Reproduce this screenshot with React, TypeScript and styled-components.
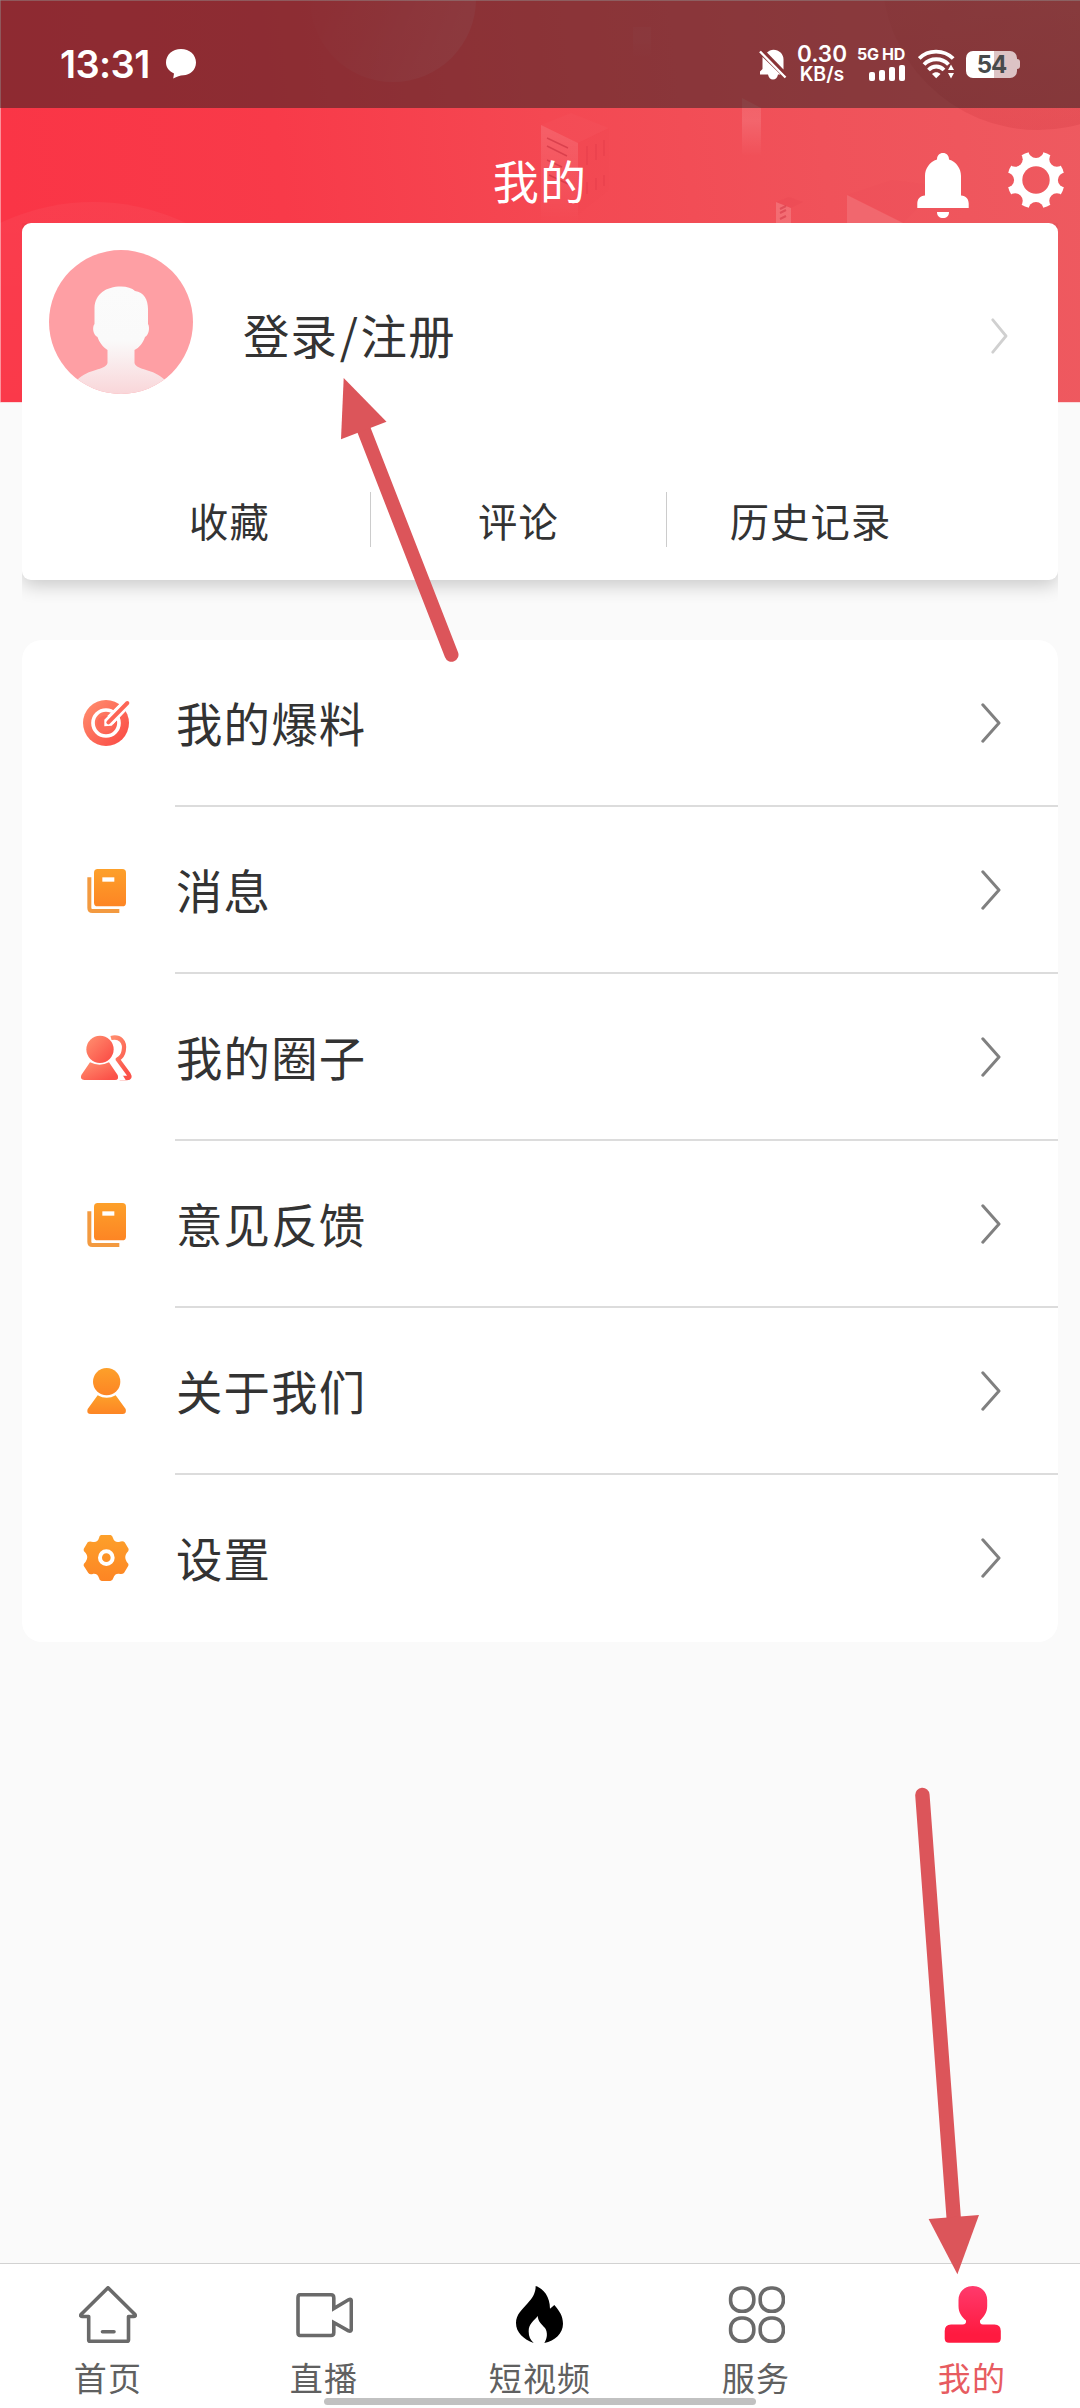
import React from "react";
import styled, { createGlobalStyle } from "styled-components";

const Global = createGlobalStyle`
  * { box-sizing: border-box; }
  body {
    margin: 0;
    background: #fafafa;
    font-family: "Noto Sans CJK SC", "Noto Sans", sans-serif;
    color: #333;
  }
  svg { display: block; flex: none; }
`;

const Screen = styled.div`
  position: relative;
  width: 1080px;
  height: 2408px;
  display: flex;
  flex-direction: column;
  background: #fafafa;
  overflow: hidden;
`;

const HeroArt = styled.svg`
  position: absolute;
  top: 0;
  left: 0;
`;

const StatusBar = styled.div`
  position: relative;
  height: 108px;
  padding: 20px 60px 0 60px;
  display: flex;
  align-items: center;
  justify-content: space-between;
  background: rgba(30, 31, 28, 0.49);
  color: #fff;
  font-family: Inter, "Noto Sans", sans-serif;
`;

const StatusGroup = styled.div`
  display: flex;
  align-items: center;
`;

const Clock = styled.span`
  width: 106px;
  font-size: 38px;
  line-height: 40px;
  font-weight: 600;
  letter-spacing: -0.6px;
  white-space: nowrap;
`;

const Speed = styled.div`
  width: 50px;
  margin: 0 11px 0 10px;
  display: flex;
  flex-direction: column;
  align-items: center;
  font-weight: 600;
  white-space: nowrap;
`;

const SpeedLine = styled.span<{ $size: number; $height: number }>`
  font-size: ${(p) => p.$size}px;
  line-height: ${(p) => p.$height}px;
`;

const Network = styled.div`
  width: 47px;
  margin-right: 13px;
  display: flex;
  flex-direction: column;
  align-items: flex-end;
  gap: 4px;
`;

const NetworkLabel = styled.span`
  font-size: 16px;
  line-height: 13px;
  font-weight: 700;
  letter-spacing: -0.3px;
  white-space: nowrap;
`;

const Bars = styled.div`
  display: flex;
  align-items: flex-end;
  gap: 4px;
`;

const Bar = styled.i<{ $h: number }>`
  width: 6px;
  height: ${(p) => p.$h}px;
  border-radius: 2px;
  background: #fff;
`;

const Battery = styled.div`
  width: 51px;
  height: 27px;
  margin-left: 11px;
  border-radius: 7px;
  display: flex;
  align-items: center;
  justify-content: center;
  background: linear-gradient(90deg, #fff 55%, #dcc3c5 55%);
  color: #474a4c;
  font-size: 24px;
  line-height: 27px;
  font-weight: 700;
  letter-spacing: -1px;
`;

const BatteryTip = styled.i`
  width: 3px;
  height: 10px;
  border-radius: 0 3px 3px 0;
  background: #dcc3c5;
`;

const TitleBar = styled.header`
  position: relative;
  height: 115px;
  display: grid;
  grid-template-columns: 1fr auto 1fr;
  color: #fff;
`;

const Title = styled.h1`
  grid-column: 2;
  margin: 0;
  padding-top: 37px;
  font-size: 46px;
  line-height: 68px;
  font-weight: 400;
  letter-spacing: 1.3px;
`;

const TitleActions = styled.div`
  display: flex;
  justify-content: flex-end;
  align-items: flex-start;
  gap: 38px;
  padding: 43px 15px 0 0;
`;

const ProfileCard = styled.section`
  position: relative;
  margin: 0 22px;
  height: 357px;
  display: flex;
  flex-direction: column;
  border-radius: 9px;
  background: #fff;
  box-shadow: 0 6px 18px rgba(0, 0, 0, 0.19);
  clip-path: inset(0 0 -40px 0);
`;

const ProfileRow = styled.div`
  height: 240px;
  padding: 27px 50px 0 27px;
  display: flex;
  align-items: flex-start;
`;

const LoginLabel = styled.div`
  flex: 1;
  margin: 50px 0 0 50px;
  font-size: 46.4px;
  line-height: 68px;
  letter-spacing: 1.2px;
`;

const Slash = styled.span`
  margin: 0 1.5px;
`;

const LoginArrow = styled.div`
  margin-top: 68px;
`;

const Tabs = styled.div`
  display: flex;
  align-items: center;
  height: 113px;
  padding: 0 92px 0 67px;
`;

const Tab = styled.div<{ $width: number }>`
  width: ${(p) => p.$width}px;
  text-align: center;
  font-size: 39.3px;
  line-height: 56px;
  letter-spacing: 1.1px;
`;

const TabDivider = styled.i`
  width: 1px;
  height: 55px;
  background: #ccc;
`;

const Menu = styled.section`
  margin: 60px 22px 0;
  height: 1002px;
  border-radius: 20px;
  background: #fff;
`;

const MenuRow = styled.div`
  height: 167px;
  padding-left: 57px;
  display: flex;
  align-items: stretch;
`;

const MenuIcon = styled.div`
  width: 96px;
  padding-top: 55px;
`;

const MenuBody = styled.div<{ $last: boolean }>`
  flex: 1;
  padding-right: 57px;
  display: flex;
  align-items: center;
  justify-content: space-between;
  border-bottom: 2px solid ${(p) => (p.$last ? "transparent" : "#dcdcdc")};
`;

const MenuLabel = styled.span`
  padding: 0 0 1px 1px;
  font-size: 46.4px;
  line-height: 68px;
  letter-spacing: 1.2px;
`;

const Nav = styled.nav`
  margin-top: auto;
  height: 145px;
  display: flex;
  border-top: 1px solid #d2d2d2;
  background: #fff;
`;

const NavItem = styled.div<{ $active: boolean }>`
  flex: 1;
  padding-top: 22px;
  display: flex;
  flex-direction: column;
  align-items: center;
  color: ${(p) => (p.$active ? "#e75b60" : "#606060")};
`;

const NavLabel = styled.span`
  margin-top: 9px;
  font-size: 33px;
  line-height: 48px;
  letter-spacing: 1.2px;
`;

const HomeIndicator = styled.div`
  position: absolute;
  left: 324px;
  bottom: 3px;
  width: 432px;
  height: 7px;
  border-radius: 4px;
  background: #c1c1c1;
`;

const Overlay = styled.svg`
  position: absolute;
  top: 0;
  left: 0;
  pointer-events: none;
`;

const Chevron = ({ w, h, color, sw }: { w: number; h: number; color: string; sw: number }) => (
  <svg width={w} height={h} viewBox={`0 0 ${w} ${h}`} fill="none">
    <path
      d={`M1.8 1.8 L${w - 2} ${h / 2} L1.8 ${h - 1.8}`}
      stroke={color}
      strokeWidth={sw}
      strokeLinecap="round"
      strokeLinejoin="round"
    />
  </svg>
);

const Hero = () => (
  <HeroArt width="1080" height="403" viewBox="0 0 1080 403">
    <defs>
      <linearGradient id="heroBg" gradientUnits="userSpaceOnUse" x1="0" y1="120" x2="1080" y2="0">
        <stop offset="0" stopColor="#fa3546" />
        <stop offset="0.25" stopColor="#f83a49" />
        <stop offset="0.5" stopColor="#f44852" />
        <stop offset="0.75" stopColor="#f0525a" />
        <stop offset="1" stopColor="#ee5a60" />
      </linearGradient>
      <linearGradient id="bubble" x1="0" y1="0" x2="1" y2="0.4">
        <stop offset="0.1" stopColor="#fff" stopOpacity="0" />
        <stop offset="1" stopColor="#fff" stopOpacity="0.08" />
      </linearGradient>
      <linearGradient id="hill" x1="0" y1="0" x2="0" y2="1">
        <stop offset="0" stopColor="#fff" stopOpacity="0.04" />
        <stop offset="0.5" stopColor="#fff" stopOpacity="0.02" />
      </linearGradient>
      <linearGradient id="pillar" x1="0" y1="0" x2="0" y2="1">
        <stop offset="0" stopColor="#fff" stopOpacity="0.1" />
        <stop offset="0.4" stopColor="#fff" stopOpacity="0.12" />
        <stop offset="1" stopColor="#fff" stopOpacity="0" />
      </linearGradient>
      <linearGradient id="tower" x1="0" y1="0" x2="0" y2="1">
        <stop offset="0" stopColor="#fff" stopOpacity="0.13" />
        <stop offset="1" stopColor="#fff" stopOpacity="0" />
      </linearGradient>
      <linearGradient id="disc" x1="0" y1="0" x2="0" y2="1">
        <stop offset="0.4" stopColor="#c22" stopOpacity="0" />
        <stop offset="1" stopColor="#c83038" stopOpacity="0.22" />
      </linearGradient>
    </defs>
    <rect width="1080" height="402" fill="url(#heroBg)" />
    <rect y="402" width="1080" height="1" fill="#fbd9db" />
    <circle cx="393" cy="-1" r="83" fill="url(#bubble)" />
    <circle cx="93" cy="418" r="216" fill="url(#hill)" />
    <circle cx="1038" cy="-26" r="156" fill="url(#disc)" />
    <rect x="633" y="27" width="18" height="30" fill="url(#pillar)" opacity="0.3" />
    <path d="M742 98 L761 108 V156 H742 Z" fill="url(#pillar)" />
    <path d="M541 125 L578 143 V223 H541 Z" fill="url(#tower)" />
    <path d="M541 125 L571 113 L609 128 L578 143 Z" fill="#fff" opacity="0.02" />
    <path d="M578 143 L609 128 V190 L578 215 Z" fill="#d02030" opacity="0.02" />
    <g stroke="#c9303f" strokeWidth="1.4" opacity="0.6">
      <path d="M547 138 L568 148 M547 146 L567 156 M547 160 L562 167 M549 175 L568 184" />
    </g>
    <g stroke="#d62f40" strokeWidth="1.4" opacity="0.3">
      <path d="M587 146 V165 M596 144 V160 M604 140 V156 M587 182 V194 M596 178 V190 M604 175 V186" />
    </g>
    <path d="M776 202 L791 208 V223 H776 Z" fill="#fff" opacity="0.16" />
    <path d="M776 202 L789 197 L803 202 L791 208 Z" fill="#d83040" opacity="0.1" />
    <path d="M780 209 L786 206 M780 213 L786 210 M780 219 L786 216" stroke="#d63a48" strokeWidth="2" opacity="0.6" />
    <path d="M847 195 L903 223 H847 Z" fill="#fff" opacity="0.12" />
    <path d="M847 195 L892 180 L940 186 L903 223 Z" fill="#e03a48" opacity="0.04" />
    <path d="M0 0.5 H1080" stroke="#fff" opacity="0.45" />
    <path d="M0.5 0 V402" stroke="#fff" opacity="0.45" />
  </HeroArt>
);

const ChatBubble = () => (
  <svg width="30" height="30" viewBox="0 0 30 30" fill="#fff">
    <path d="M15 0 C23.5 0 30 5.8 30 13.5 C30 21.5 23.5 26 17.5 26.3 C14 26.5 11 27.5 7.2 29.5 L8 24.6 C3 22 0 18.5 0 13.5 C0 5.8 6.5 0 15 0 Z" />
  </svg>
);

const MuteBell = () => (
  <svg width="28" height="31" viewBox="0 0 28 31" fill="#fff">
    <path d="M8 3.5 C9.7 1.8 12 0.7 14.5 0.7 C20 0.7 24.5 5 24.5 10.5 V20.5 Z" />
    <path d="M3.5 8 L21.5 25.5 H19 C18.5 28.5 16.5 30.5 14 30.5 C11.5 30.5 9.5 28.5 9 25.5 H1 V22.5 L3.5 20 Z" />
    <path d="M1 2.5 L26.5 28.5" stroke="#fff" strokeWidth="2.4" />
    <path d="M3.5 1.8 L27 25.6" stroke="#8a3336" strokeWidth="1.6" />
  </svg>
);

const Wifi = () => (
  <svg width="37" height="30" viewBox="0 0 37 30" fill="none" stroke="#fff" strokeWidth="3.8">
    <path d="M1.2 9.5 C10 0.2 26 0.2 35.2 9.5" />
    <path d="M6 15.5 C12.5 8.5 24 8.5 30.5 15.5" />
    <path d="M10.5 21 C15 16.3 21.5 16.3 26 21" />
    <path d="M14 25 C16.5 22.6 20 22.6 22.5 25 L18.2 29.2 Z" fill="#fff" stroke="none" />
    <path d="M33 15.5 L36 21 H30 Z M33 29.5 L36 24 H30 Z" fill="#fff" stroke="none" />
  </svg>
);

const Bell = () => (
  <svg width="52" height="67" viewBox="0 0 52 67" fill="#fff">
    <path d="M26 2 C29.5 2 32 4.5 32 8.5 C39.5 11 44 17.5 44 25 V44.5 C49 45 51.7 48 51.7 52.5 V57 H0.3 V52.5 C0.3 48 3 45 8 44.5 V25 C8 17.5 12.5 11 20 8.5 C20 4.5 22.5 2 26 2 Z" />
    <path d="M20 61 H32 C32 65 29.5 67 26 67 C22.5 67 20 65 20 61 Z" />
  </svg>
);

const notchAngles = [0, 45, 90, 135, 180, 225, 270, 315];

const GearOutline = () => (
  <svg width="58" height="58" viewBox="-29 -29 58 58">
    <mask id="gearNotches">
      <rect x="-30" y="-30" width="60" height="60" fill="#fff" />
      <circle r="13.7" fill="#000" />
      {notchAngles.map((a) => (
        <circle key={a} r="7.6" cx="29.5" transform={`rotate(${a})`} fill="#000" />
      ))}
    </mask>
    <circle r="28.8" fill="#fff" mask="url(#gearNotches)" />
  </svg>
);

const Avatar = () => (
  <svg width="144" height="144" viewBox="0 0 144 144">
    <defs>
      <clipPath id="avatarClip">
        <circle cx="72" cy="72" r="72" />
      </clipPath>
      <linearGradient id="avatarBody" x1="0" y1="0" x2="0" y2="1">
        <stop offset="0" stopColor="#fbfbfb" />
        <stop offset="0.5" stopColor="#fafafa" />
        <stop offset="1" stopColor="#f9d6d9" />
      </linearGradient>
    </defs>
    <g clipPath="url(#avatarClip)">
      <rect width="144" height="144" fill="#fe9fa4" />
      <path
        d="M72 36.5 C78 36.5 83 38 86 41 C95 42 99 50 99 59 V74 C101 77 100 85 96 87 C94 93 90 98 85.5 100 V113 C88 121 104 118 116 130 V144 H28 V130 C40 118 56 121 58.5 113 V100 C54 97 50 92 48.5 87 C44 85 43 77 45.5 74 V58 C46 44 57 36.5 72 36.5 Z"
        fill="url(#avatarBody)"
      />
    </g>
  </svg>
);

const Gradients = () => (
  <defs>
    <linearGradient id="coral" x1="0" y1="0" x2="1" y2="1">
      <stop offset="0.1" stopColor="#ff8a6c" />
      <stop offset="0.85" stopColor="#fb5249" />
    </linearGradient>
    <linearGradient id="amber" x1="0" y1="0" x2="0" y2="1">
      <stop offset="0" stopColor="#fda02a" />
      <stop offset="1" stopColor="#fd8524" />
    </linearGradient>
  </defs>
);

const IconBox = ({ children }: { children: React.ReactNode }) => (
  <svg width="55" height="55" viewBox="0 0 165 165">
    <Gradients />
    {children}
  </svg>
);

const TargetIcon = () => (
  <IconBox>
    <circle cx="81" cy="84" r="69" fill="url(#coral)" />
    <circle cx="81" cy="84" r="39" fill="none" stroke="#fff" strokeWidth="11" />
    <path d="M76 92 V72 L140 8 L160 28 L98 92 Z" fill="#fff" />
    <circle cx="78" cy="86" r="24" fill="#fd6a59" />
    <path d="M76 94 V74 L140 10 L158 28 L98 92 Z" fill="#fff" />
    <path d="M88 82 L145 24" stroke="#fd6656" strokeWidth="12" strokeLinecap="round" />
  </IconBox>
);

const BookIcon = () => (
  <IconBox>
    <path
      d="M31 46 V138 Q31 147 40 147 H121"
      fill="none"
      stroke="#f39a40"
      strokeWidth="12"
    />
    <rect x="45" y="21" width="96" height="112" rx="11" fill="url(#amber)" />
    <rect x="70" y="46" width="36" height="13" fill="#fff" />
  </IconBox>
);

const GroupIcon = () => (
  <IconBox>
    <path
      d="M96 27 C122 20 140 38 134 66 C132 78 126 86 116 91 L149 136 Q156 147 144 147 H122"
      fill="none"
      stroke="url(#coral)"
      strokeWidth="13"
      strokeLinejoin="round"
    />
    <path d="M96 82 L140 153 H118 L70 90 Z" fill="#fff" />
    <circle cx="63" cy="61" r="41" fill="url(#coral)" />
    <path
      d="M33 100 Q62 114 90 100 L116 138 Q121 153 108 153 H16 Q2 152 7 138 Z"
      fill="url(#coral)"
    />
  </IconBox>
);

const PersonIcon = () => (
  <IconBox>
    <circle cx="83" cy="56" r="41" fill="url(#amber)" />
    <path d="M56 97 Q83 112 110 97 L140 138 Q144 153 130 153 H36 Q21 153 26 138 Z" fill="url(#amber)" />
  </IconBox>
);

const GearIcon = () => (
  <IconBox>
    <path
      d="M66 15 H95 Q100 16 102 24 Q106 38 120 36 Q132 31 137 37 L149 57 Q150 64 143 69 Q134 82 143 95 Q150 101 148 107 L135 129 Q129 134 120 131 Q107 130 103 144 Q101 152 94 153 H68 Q61 152 60 144 Q56 130 43 131 Q33 135 28 129 L14 107 Q13 101 20 95 Q30 82 20 69 Q12 64 14 57 L26 37 Q31 32 42 36 Q56 38 60 24 Q61 16 66 15 Z"
      fill="url(#amber)"
    />
    <circle cx="82" cy="83" r="19" fill="none" stroke="#fff" strokeWidth="12" />
  </IconBox>
);

const NavSvg = ({ children }: { children: React.ReactNode }) => (
  <svg
    width="58"
    height="58"
    viewBox="0 0 58 58"
    fill="none"
    stroke="#6a6a6a"
    strokeWidth="3.6"
    strokeLinejoin="round"
    strokeLinecap="round"
  >
    {children}
  </svg>
);

const HomeIcon = () => (
  <NavSvg>
    <path d="M29 1.8 L56 28.5 Q57 30.5 54.5 30.5 H49.5 V54 Q49.5 55.3 48 55.3 H11 Q9.7 55.3 9.7 54 V30.5 H3.5 Q1 30.5 2 28.5 Z" />
    <path d="M23.5 45.7 H35" />
  </NavSvg>
);

const CameraIcon = () => (
  <NavSvg>
    <path
      d="M5 8.8 H36 Q38.8 8.8 38.8 12 V22.5 L53.5 13.8 Q56.3 12.5 56.3 15 V43 Q56.3 46 53.5 44.8 L38.8 36.5 V46.5 Q38.8 49.5 36 49.5 H5 Q3 49.5 3 46.5 V12 Q3 8.8 5 8.8 Z"
      strokeLinejoin="miter"
    />
  </NavSvg>
);

const FlameIcon = () => (
  <svg width="58" height="58" viewBox="0 0 174 174">
    <path
      d="M74 0 C98 8 117 32 117 68 L130 57 C146 76 156 90 156 113 C156 142 132 164 100 171 C110 156 110 138 102 126 C90 112 82 108 80 90 C70 104 53 112 53 136 C53 152 58 162 68 171 C38 160 15 140 15 111 C15 86 34 70 50 52 C64 36 74 22 74 0 Z"
      fill="#000"
    />
  </svg>
);

const GridIcon = () => (
  <NavSvg>
    <rect x="3.6" y="2" width="23.2" height="23.2" rx="10.5" />
    <rect x="33.2" y="2" width="23.2" height="23.2" rx="10.5" />
    <rect x="3.6" y="32" width="23.2" height="23.2" rx="10.5" />
    <rect x="33.2" y="32" width="23.2" height="23.2" rx="10.5" />
  </NavSvg>
);

const MineIcon = () => (
  <svg width="58" height="58" viewBox="0 0 58 58">
    <defs>
      <linearGradient id="rose" x1="0" y1="0" x2="0" y2="1">
        <stop offset="0" stopColor="#ff3a6c" />
        <stop offset="0.85" stopColor="#ff1a40" />
      </linearGradient>
    </defs>
    <path
      d="M29.8 0 C38 0 44.2 6 44.2 14 V20 C44.2 27 40.5 31 37 34.5 Q36.5 38.5 40 38.5 H51.5 Q57.8 38.5 57.8 45 V52.5 Q57.8 56.7 53.5 56.7 H6 Q1.7 56.7 1.7 52.5 V45 Q1.7 38.5 8 38.5 H19.5 Q23.5 38.5 23 34.5 C19 31 15.5 27 15.5 20 V14 C15.5 6 21.6 0 29.8 0 Z"
      fill="url(#rose)"
    />
  </svg>
);

const menuItems = [
  { label: "我的爆料", icon: <TargetIcon /> },
  { label: "消息", icon: <BookIcon /> },
  { label: "我的圈子", icon: <GroupIcon /> },
  { label: "意见反馈", icon: <BookIcon /> },
  { label: "关于我们", icon: <PersonIcon /> },
  { label: "设置", icon: <GearIcon /> },
];

const navItems = [
  { label: "首页", icon: <HomeIcon /> },
  { label: "直播", icon: <CameraIcon /> },
  { label: "短视频", icon: <FlameIcon /> },
  { label: "服务", icon: <GridIcon /> },
  { label: "我的", icon: <MineIcon />, active: true },
];

const Arrows = () => (
  <Overlay width="1080" height="2408" viewBox="0 0 1080 2408">
    <g fill="#dc555a" stroke="#dc555a">
      <path d="M451.5 654.8 L362 425" strokeWidth="14" strokeLinecap="round" />
      <path d="M343.7 378 L386.5 421.7 L341 439.3 Z" stroke="none" />
      <path d="M922.4 1795 L954 2222" strokeWidth="14.4" strokeLinecap="round" />
      <path d="M957.4 2274.3 L928.6 2219 L979 2215 Z" stroke="none" />
    </g>
  </Overlay>
);

export default function App() {
  return (
    <Screen>
      <Global />
      <Hero />
      <StatusBar>
        <StatusGroup>
          <Clock>13:31</Clock>
          <ChatBubble />
        </StatusGroup>
        <StatusGroup>
          <MuteBell />
          <Speed>
            <SpeedLine $size={22.5} $height={20}>0.30</SpeedLine>
            <SpeedLine $size={19.5} $height={20}>KB/s</SpeedLine>
          </Speed>
          <Network>
            <NetworkLabel>5G HD</NetworkLabel>
            <Bars>
              {[9, 11, 14, 16].map((h) => (
                <Bar key={h} $h={h} />
              ))}
            </Bars>
          </Network>
          <Wifi />
          <Battery>54</Battery>
          <BatteryTip />
        </StatusGroup>
      </StatusBar>
      <TitleBar>
        <Title>我的</Title>
        <TitleActions>
          <Bell />
          <GearOutline />
        </TitleActions>
      </TitleBar>
      <ProfileCard>
        <ProfileRow>
          <Avatar />
          <LoginLabel>
            登录<Slash>/</Slash>注册
          </LoginLabel>
          <LoginArrow>
            <Chevron w={17} h={36} color="#d0d0d0" sw={2.8} />
          </LoginArrow>
        </ProfileRow>
        <Tabs>
          <Tab $width={281}>收藏</Tab>
          <TabDivider />
          <Tab $width={295}>评论</Tab>
          <TabDivider />
          <Tab $width={287}>历史记录</Tab>
        </Tabs>
      </ProfileCard>
      <Menu>
        {menuItems.map((item, i) => (
          <MenuRow key={item.label}>
            <MenuIcon>{item.icon}</MenuIcon>
            <MenuBody $last={i === menuItems.length - 1}>
              <MenuLabel>{item.label}</MenuLabel>
              <Chevron w={20} h={40} color="#808080" sw={3} />
            </MenuBody>
          </MenuRow>
        ))}
      </Menu>
      <Nav>
        {navItems.map((item) => (
          <NavItem key={item.label} $active={!!item.active}>
            {item.icon}
            <NavLabel>{item.label}</NavLabel>
          </NavItem>
        ))}
      </Nav>
      <HomeIndicator />
      <Arrows />
    </Screen>
  );
}
